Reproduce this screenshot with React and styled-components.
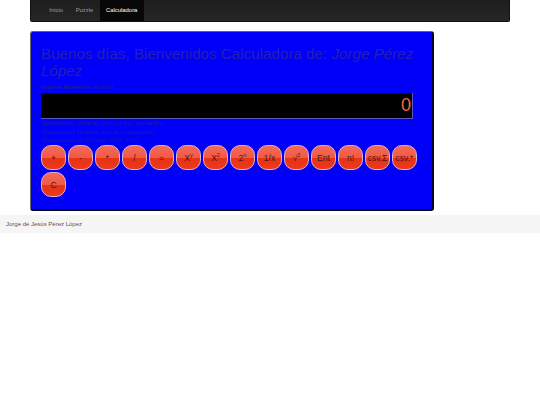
import React from "react";
import styled, { createGlobalStyle } from "styled-components";

const GlobalStyle = createGlobalStyle`
  html, body {
    margin: 0;
    padding: 0;
    background: #fff;
    font-family: "Liberation Sans", Arial, sans-serif;
  }
`;

const Page = styled.div`
  width: 540px;
`;

const Navbar = styled.nav`
  margin: 0 30px 9px;
  height: 22px;
  box-sizing: border-box;
  padding-left: 12px;
  display: flex;
  background: linear-gradient(#1e1e1e, #262626);
  border: 1px solid #111;
  border-top: 0;
  border-radius: 0 0 2px 2px;
`;

const NavLink = styled.a`
  display: flex;
  align-items: center;
  padding: 0 6.3px 1px;
  font-size: 5.9px;
  color: ${(p) => (p.$active ? "#fff" : "#9d9d9d")};
  background: ${(p) => (p.$active ? "#080808" : "transparent")};
`;

const Panel = styled.section`
  width: 404px;
  height: 180px;
  box-sizing: border-box;
  margin-left: 30px;
  padding: 12.5px 10px 0;
  background: #0000f8;
  border: 1px solid #666;
  border-right: 2px solid #050522;
  border-bottom: 2px solid #050522;
  border-radius: 3px;
`;

const Title = styled.h1`
  margin: 0;
  font-size: 15.2px;
  line-height: 17px;
  font-weight: 400;
  color: #2020b4;
  em {
    font-style: italic;
  }
`;

const Label = styled.div`
  margin-top: 5px;
  font-size: 5.9px;
  line-height: 7px;
  font-weight: 700;
  color: #1e1e9c;
`;

const Display = styled.div`
  margin-top: 2.5px;
  height: 26px;
  width: 372px;
  box-sizing: border-box;
  display: flex;
  align-items: center;
  justify-content: flex-end;
  padding-right: 1px;
  background: #000;
  border: 1px solid #5a5ab8;
  border-width: 0 1px 1px 0;
  font-size: 18px;
  color: #f4683e;
`;

const Hints = styled.div`
  margin-bottom: 0.5px;
`;

const Hint = styled.div`
  font-size: 6px;
  line-height: 8.5px;
  color: #1e1e9c;
`;

const Keys = styled.div`
  display: flex;
  flex-wrap: wrap;
  gap: 2px;
  width: 380px;
`;

const Key = styled.button`
  width: 25px;
  height: 25px;
  padding: 0;
  box-sizing: border-box;
  border: 1px solid #e0b0cc;
  border-radius: 10px;
  background: linear-gradient(#f26a58 0%, #f05a46 52%, #e83214 54%, #ea3a1c 100%);
  color: #4a1616;
  font-family: "Liberation Sans", Arial, sans-serif;
  font-size: 8.5px;
  sup {
    font-size: 5.5px;
    line-height: 0;
  }
`;

const Footer = styled.footer`
  margin-top: 4px;
  height: 18px;
  box-sizing: border-box;
  padding-left: 6px;
  display: flex;
  align-items: center;
  background: #f5f5f5;
  font-size: 6px;
  color: #555;
`;

const keys = [
  "+", "-", "*", "/", "=",
  <>X<sup>y</sup></>,
  <>X<sup>2</sup></>,
  <>2<sup>n</sup></>,
  "1/x",
  <>√<sup>2</sup></>,
  "Ent", "n!", "csv.Σ", "csv.*", "C",
];

export default function App() {
  return (
    <Page>
      <GlobalStyle />
      <Navbar>
        <NavLink>Inicio</NavLink>
        <NavLink>Puzzle</NavLink>
        <NavLink $active>Calculadora</NavLink>
      </Navbar>
      <Panel>
        <Title>
          Buenos días, Bienvenidos Calculadora de: <em>Jorge Pérez López</em>
        </Title>
        <Label>Ingrese Numero/s en csv)</Label>
        <Display>0</Display>
        <Hints>
          <Hint>Operaciones unitarias (con un solo operando)</Hint>
          <Hint>Operaciones binarias (con dos operandos)</Hint>
          <Hint>Operaciones en Formato CSV: n,n,n…</Hint>
        </Hints>
        <Keys>
          {keys.map((k, i) => (
            <Key key={i}>{k}</Key>
          ))}
        </Keys>
      </Panel>
      <Footer>Jorge de Jesús Pérez López</Footer>
    </Page>
  );
}
